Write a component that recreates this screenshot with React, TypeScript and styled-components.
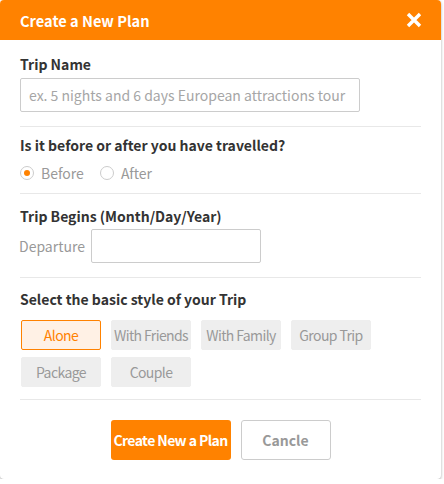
import React, { useState } from "react";
import styled, { createGlobalStyle } from "styled-components";

const GlobalStyle = createGlobalStyle`
	body {
		margin: 0;
		background: #ffffff;
		font-family: "Noto Sans CJK KR", "Noto Sans", sans-serif;
	}
`;

const Modal = styled.div`
	width: 441px;
	background: #fff;
	border-radius: 4px;
	box-shadow: 0 1px 3px rgba(0, 0, 0, 0.35);
	overflow: hidden;
`;

const Header = styled.div`
	height: 40px;
	background: #ff8200;
	display: flex;
	align-items: center;
	justify-content: space-between;
	padding: 0 19px 0 20px;
`;

const Title = styled.h1`
	margin: 0;
	font-size: 14.6px;
	font-weight: 700;
	color: #fff;
`;

const CloseButton = styled.button`
	border: none;
	background: none;
	padding: 0;
	width: 16px;
	height: 16px;
	display: flex;
	align-items: center;
	justify-content: center;
	cursor: pointer;
`;

const Body = styled.div`
	padding: 0 20px;
`;

const Section = styled.div<{ $top: number; $bottom: number }>`
	padding: ${(p) => p.$top}px 0 ${(p) => p.$bottom}px;
	border-bottom: 1px solid #e8e8e8;
`;

const Label = styled.div<{ $gap: number }>`
	font-size: 14px;
	font-weight: 700;
	color: #333;
	line-height: 20px;
	margin-bottom: ${(p) => p.$gap}px;
`;

const TextInput = styled.input<{ $w: number }>`
	box-sizing: border-box;
	display: block;
	width: ${(p) => p.$w}px;
	height: 34px;
	margin: 0;
	border: 1px solid #ccc;
	border-radius: 2px;
	padding: 0 8px;
	font-family: inherit;
	font-size: 14px;
	color: #333;
	&::placeholder {
		color: #a6a6a6;
	}
`;

const RadioRow = styled.div`
	display: flex;
	gap: 16px;
	height: 20px;
	align-items: center;
`;

const RadioLabel = styled.label`
	display: flex;
	align-items: center;
	gap: 7px;
	font-size: 14px;
	color: #999;
	cursor: pointer;
`;

const RadioDot = styled.span<{ $on: boolean }>`
	box-sizing: border-box;
	width: 14px;
	height: 14px;
	border-radius: 50%;
	border: 1px solid #ccc;
	display: flex;
	align-items: center;
	justify-content: center;
	&::after {
		content: "";
		width: 6px;
		height: 6px;
		border-radius: 50%;
		background: ${(p) => (p.$on ? "#ff8200" : "transparent")};
	}
`;

const DateRow = styled.div`
	display: flex;
	align-items: center;
	gap: 6px;
	margin-left: -1px;
`;

const SubLabel = styled.span`
	font-size: 14px;
	color: #999;
`;

const ChipGrid = styled.div`
	display: grid;
	grid-template-columns: repeat(4, 80px);
	column-gap: 10px;
	row-gap: 7px;
	padding-left: 1px;
`;

const Chip = styled.button<{ $on: boolean }>`
	box-sizing: border-box;
	height: 30px;
	border-radius: 2px;
	border: 1px solid ${(p) => (p.$on ? "#ff8200" : "#eeeeee")};
	background: ${(p) => (p.$on ? "#fff1e5" : "#eeeeee")};
	color: ${(p) => (p.$on ? "#ff8200" : "#999")};
	font-family: inherit;
	font-size: 14px;
	letter-spacing: -0.6px;
	padding: 0;
	white-space: nowrap;
	cursor: pointer;
`;

const Footer = styled.div`
	display: flex;
	justify-content: center;
	gap: 10px;
	padding: 20px 0 19px;
`;

const PrimaryButton = styled.button`
	width: 120px;
	height: 40px;
	border: none;
	border-radius: 3px;
	background: #ff8200;
	color: #fff;
	font-family: inherit;
	font-size: 14px;
	font-weight: 700;
	letter-spacing: -0.6px;
	white-space: nowrap;
	padding: 0;
	cursor: pointer;
`;

const SecondaryButton = styled.button`
	width: 90px;
	height: 40px;
	border: 1px solid #ccc;
	border-radius: 3px;
	background: #fff;
	color: #999;
	font-family: inherit;
	font-size: 14px;
	font-weight: 700;
	padding: 0;
	cursor: pointer;
`;

const styles = ["Alone", "With Friends", "With Family", "Group Trip", "Package", "Couple"];

const App = () => {
	const [when, setWhen] = useState("Before");
	const [style, setStyle] = useState("Alone");

	return (
		<>
			<GlobalStyle />
			<Modal>
				<Header>
					<Title>Create a New Plan</Title>
					<CloseButton aria-label="close">
						<svg width="16" height="16" viewBox="0 0 16 16">
							<path d="M2 2 L14 14 M14 2 L2 14" stroke="#fff" strokeWidth="3.4" />
						</svg>
					</CloseButton>
				</Header>
				<Body>
					<Section $top={14} $bottom={14}>
						<Label $gap={4}>Trip Name</Label>
						<TextInput $w={340} placeholder="ex. 5 nights and 6 days European attractions tour" />
					</Section>
					<Section $top={8} $bottom={10}>
						<Label $gap={8}>Is it before or after you have travelled?</Label>
						<RadioRow>
							{["Before", "After"].map((w) => (
								<RadioLabel key={w} onClick={() => setWhen(w)}>
									<RadioDot $on={when === w} />
									{w}
								</RadioLabel>
							))}
						</RadioRow>
					</Section>
					<Section $top={12} $bottom={14}>
						<Label $gap={3}>Trip Begins (Month/Day/Year)</Label>
						<DateRow>
							<SubLabel>Departure</SubLabel>
							<TextInput $w={170} />
						</DateRow>
					</Section>
					<Section $top={11} $bottom={12}>
						<Label $gap={11}>Select the basic style of your Trip</Label>
						<ChipGrid>
							{styles.map((s) => (
								<Chip key={s} $on={style === s} onClick={() => setStyle(s)}>
									{s}
								</Chip>
							))}
						</ChipGrid>
					</Section>
					<Footer>
						<PrimaryButton>Create New a Plan</PrimaryButton>
						<SecondaryButton>Cancle</SecondaryButton>
					</Footer>
				</Body>
			</Modal>
		</>
	);
};

export default App;
